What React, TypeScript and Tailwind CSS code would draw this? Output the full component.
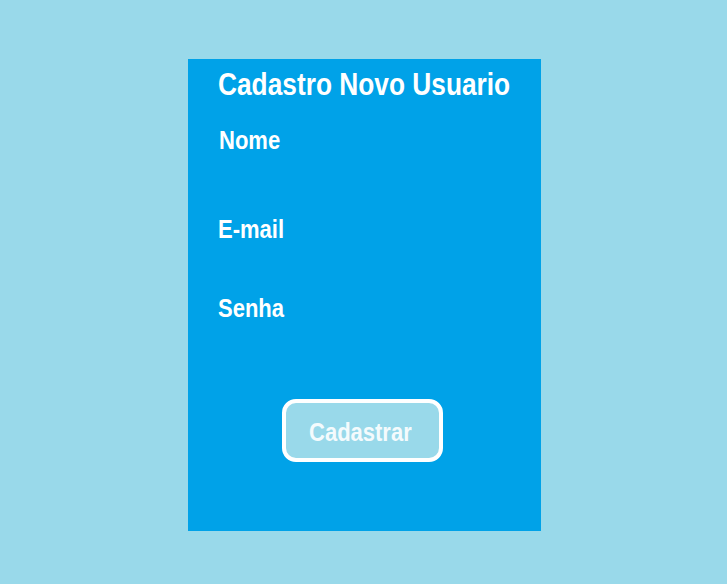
export default function App() {
  const font = { fontFamily: '"Liberation Sans", Arial, sans-serif' };
  return (
    <div className="min-h-[584px] w-full bg-[#99d9ea] pt-[59px]" style={font}>
      <div className="ml-[188px] flex h-[472px] w-[353px] flex-col items-start bg-[#00a2e8] pl-[30px] pt-[10px] text-white">
        <h1 className="origin-left scale-x-[0.848] whitespace-nowrap text-[31px] font-bold leading-none">Cadastro Novo Usuario</h1>
        <label className="ml-[1px] mt-[28px] origin-left scale-x-[0.88] whitespace-nowrap text-[25px] font-bold leading-none">Nome</label>
        <label className="mt-[64px] origin-left scale-x-[0.88] whitespace-nowrap text-[25px] font-bold leading-none">E-mail</label>
        <label className="mt-[54px] origin-left scale-x-[0.88] whitespace-nowrap text-[25px] font-bold leading-none">Senha</label>
        <button className="ml-[64px] mt-[78px] flex h-[63px] w-[161px] items-start justify-center rounded-[14px] border-4 border-white bg-[#99d9ea] pt-[17px] text-[25px] font-bold leading-none text-[#f4fbfd]">
          <span className="mr-[4px] inline-block scale-x-[0.88] whitespace-nowrap">Cadastrar</span>
        </button>
      </div>
    </div>
  );
}
